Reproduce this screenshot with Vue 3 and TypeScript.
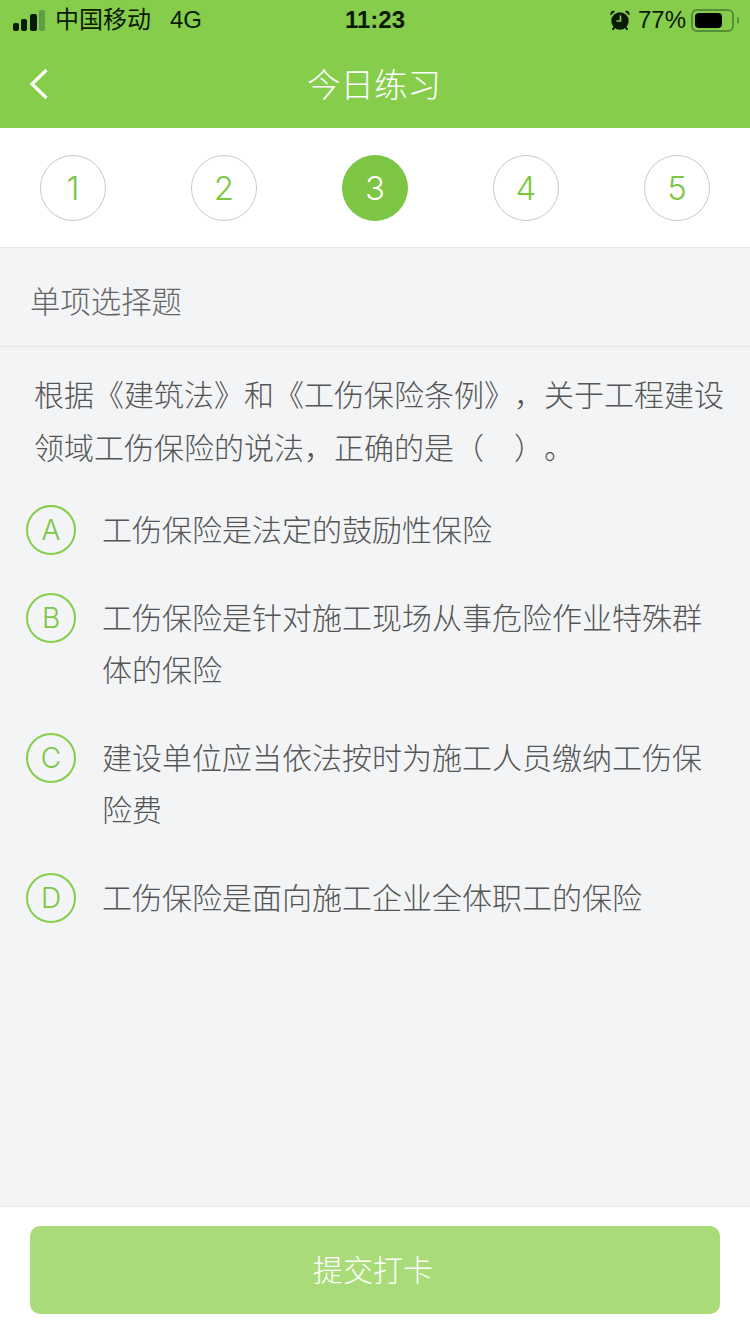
<template>
  <div class="page">
    <header class="top">
      <div class="status">
        <div class="status-left">
          <svg class="signal" width="32" height="21" viewBox="0 0 32 21">
            <rect x="0" y="13" width="6" height="8" rx="2" fill="#0b1a05" />
            <rect x="8" y="9" width="6" height="12" rx="2" fill="#0b1a05" />
            <rect x="17" y="4" width="7" height="17" rx="2" fill="#0b1a05" />
            <rect x="26" y="0" width="6" height="21" rx="2" fill="#5f9c48" />
          </svg>
          <span class="carrier">中国移动</span>
          <span class="net">4G</span>
        </div>
        <span class="time">11:23</span>
        <div class="status-right">
          <svg class="alarm" width="20" height="20" viewBox="0 0 20 20">
            <path d="M.5 5.500 5 1.500C3-.5-.3 1.500.5 5.500ZM19.500 5.500 15 1.500C17-.5 20.300 1.500 19.500 5.500Z" fill="#0b1a05" />
            <path d="M4.500 17 3 19.200M15.500 17 17 19.200" stroke="#0b1a05" stroke-width="2" stroke-linecap="round" />
            <circle cx="10" cy="11" r="8.700" fill="#0b1a05" />
            <path d="M10.500 5.500V11H6.500" fill="none" stroke="#86cd4c" stroke-width="1.600" />
          </svg>
          <span class="percent">77%</span>
          <div class="battery">
            <div class="battery-level" :style="{ width: battery + '%' }" />
          </div>
          <span class="battery-nub" />
        </div>
      </div>
      <div class="nav">
        <svg class="back" width="20" height="32" viewBox="0 0 20 32">
          <path d="M17.500 2 3 16 17.500 30" fill="none" stroke="#fff" stroke-width="3.200" />
        </svg>
        <span class="nav-title">今日练习</span>
      </div>
    </header>

    <div class="steps">
      <div
        v-for="n in steps"
        :key="n"
        :class="['step', n === current ? 'step-active' : '']"
      >
        {{ n }}
      </div>
    </div>

    <main class="body">
      <div class="section">单项选择题</div>
      <p class="question">
        根据《建筑法》和《工伤保险条例》，关于工程建设领域工伤保险的说法，正确的是（　）。
      </p>
      <div class="options">
        <div v-for="opt in options" :key="opt.key" class="option">
          <span class="option-key">{{ opt.key }}</span>
          <span class="option-text">{{ opt.text }}</span>
        </div>
      </div>
    </main>

    <footer class="footer">
      <button class="submit" type="button">提交打卡</button>
    </footer>
  </div>
</template>

<script setup lang="ts">
const battery = 77;
const steps = [1, 2, 3, 4, 5];
const current = 3;

const options = [
  { key: "A", text: "工伤保险是法定的鼓励性保险" },
  { key: "B", text: "工伤保险是针对施工现场从事危险作业特殊群体的保险" },
  { key: "C", text: "建设单位应当依法按时为施工人员缴纳工伤保险费" },
  { key: "D", text: "工伤保险是面向施工企业全体职工的保险" },
];
</script>

<style>
html,
body {
  margin: 0;
  background: #f2f4f6;
}
</style>

<style scoped>
.page {
  display: flex;
  flex-direction: column;
  width: 750px;
  height: 1334px;
  overflow: hidden;
  background: #f2f4f6;
  font-family: "Liberation Sans", "Noto Sans CJK SC", sans-serif;
  text-spacing-trim: space-all;
}

.top {
  background: #86cd4c;
}

.status {
  display: grid;
  grid-template-columns: 1fr auto 1fr;
  align-items: center;
  height: 40px;
  color: #0b1a05;
  font-size: 24px;
}

.status-left {
  display: flex;
  align-items: center;
  padding-left: 13px;
}

.signal {
  margin-right: 10px;
}

.carrier {
  line-height: 24px;
  margin-top: -1px;
}

.net {
  margin-left: 19px;
}

.time {
  font-weight: 700;
}

.status-right {
  display: flex;
  align-items: center;
  justify-content: flex-end;
  padding-right: 11px;
}

.percent {
  margin: 0 5px 0 8px;
}

.battery {
  box-sizing: border-box;
  width: 43px;
  height: 23px;
  padding: 2px;
  border: 2px solid #558f38;
  border-radius: 6px;
}

.battery-level {
  height: 100%;
  border-radius: 4px;
  background: #000;
}

.battery-nub {
  width: 2px;
  height: 7px;
  margin-left: 3px;
  border-radius: 0 2px 2px 0;
  background: #558f38;
}

.nav {
  display: flex;
  align-items: center;
  justify-content: center;
  position: relative;
  box-sizing: border-box;
  height: 88px;
  padding: 0 2px 4px 0;
}

.back {
  position: absolute;
  left: 29px;
  top: 28px;
}

.nav-title {
  color: #fff;
  font-size: 33.500px;
  font-weight: 300;
}

.steps {
  display: flex;
  align-items: center;
  justify-content: space-between;
  box-sizing: border-box;
  height: 120px;
  padding: 0 40px;
  background: #fff;
  border-bottom: 1px solid #e4e6e8;
}

.step {
  display: flex;
  align-items: center;
  justify-content: center;
  box-sizing: border-box;
  width: 66px;
  height: 66px;
  border: 1px solid #c8c8c8;
  border-radius: 50%;
  color: #7cc644;
  font-family: Inter, sans-serif;
  font-size: 33px;
  font-weight: 300;
}

.step-active {
  border-color: #7cc644;
  background: #7cc644;
  color: #fff;
}

.body {
  flex: 1;
}

.section {
  box-sizing: border-box;
  height: 99px;
  padding: 0 30px;
  border-bottom: 1px solid #e4e6e8;
  color: #666;
  font-size: 30.400px;
  font-weight: 300;
  line-height: 108px;
}

.question {
  margin: 0;
  padding: 22px 25px 0 34px;
  color: #555;
  font-size: 30px;
  font-weight: 300;
  line-height: 53px;
}

.options {
  display: flex;
  flex-direction: column;
  gap: 36px;
  margin-top: 30px;
  padding: 0 46px 0 26px;
}

.option {
  display: flex;
  align-items: flex-start;
}

.option-key {
  display: flex;
  flex: none;
  align-items: center;
  justify-content: center;
  box-sizing: border-box;
  width: 50px;
  height: 50px;
  margin-right: 26px;
  border: 2px solid #86cd4c;
  border-radius: 50%;
  color: #7cc644;
  font-family: Inter, sans-serif;
  font-size: 28px;
  font-weight: 300;
}

.option-text {
  color: #555;
  font-size: 30px;
  font-weight: 300;
  line-height: 52px;
}

.footer {
  box-sizing: border-box;
  height: 128px;
  padding: 19px 30px 0;
  background: #fff;
  border-top: 1px solid #e6e8ea;
}

.submit {
  display: block;
  width: 100%;
  height: 88px;
  padding: 0 4px 4px 0;
  border: 0;
  border-radius: 10px;
  background: #a9dc78;
  color: #fff;
  font-family: inherit;
  font-size: 30px;
  font-weight: 300;
}
</style>
